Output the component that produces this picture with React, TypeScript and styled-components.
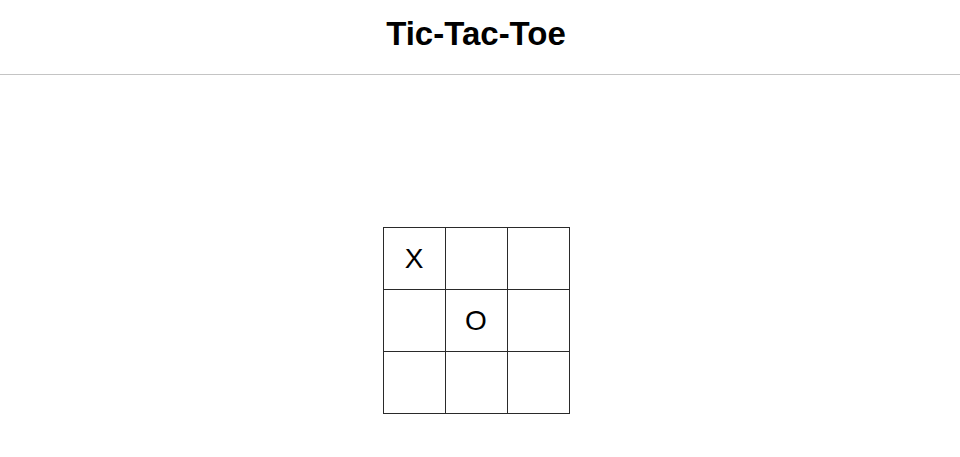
import React, { useState } from 'react';
import styled, { createGlobalStyle } from 'styled-components';

const GlobalStyle = createGlobalStyle`
  html, body {
    margin: 0;
    padding: 0;
    background: #ffffff;
    font-family: "Liberation Sans", Arial, sans-serif;
    color: #000000;
  }
`;

const Header = styled.header`
  padding: 15px 8px 22px 0;
  border-bottom: 1px solid #c4c4c4;
  text-align: center;
`;

const Title = styled.h1`
  margin: 0;
  font-size: 33px;
  font-weight: 700;
  line-height: 37px;
`;

const Main = styled.main`
  display: flex;
  justify-content: center;
  padding: 152px 8px 0 0;
`;

const Board = styled.div`
  display: grid;
  grid-template-columns: repeat(3, 61px);
  grid-template-rows: repeat(3, 61px);
  gap: 1px;
  padding: 1px;
  background: #2a2a2a;
`;

const Cell = styled.button`
  display: flex;
  align-items: center;
  justify-content: center;
  border: none;
  padding: 0;
  margin: 0;
  background: #ffffff;
  font-family: "Liberation Sans", Arial, sans-serif;
  font-size: 28px;
  font-weight: 400;
  color: #000000;
  cursor: pointer;
`;

type Mark = 'X' | 'O' | null;

const App: React.FC = () => {
  const [cells, setCells] = useState<Mark[]>(['X', null, null, null, 'O', null, null, null, null]);
  const [turn, setTurn] = useState<'X' | 'O'>('X');

  const play = (index: number) => {
    if (cells[index]) return;
    const next = [...cells];
    next[index] = turn;
    setCells(next);
    setTurn(turn === 'X' ? 'O' : 'X');
  };

  return (
    <>
      <GlobalStyle />
      <Header>
        <Title>Tic-Tac-Toe</Title>
      </Header>
      <Main>
        <Board>
          {cells.map((mark, index) => (
            <Cell key={index} onClick={() => play(index)}>
              {mark}
            </Cell>
          ))}
        </Board>
      </Main>
    </>
  );
};

export default App;
